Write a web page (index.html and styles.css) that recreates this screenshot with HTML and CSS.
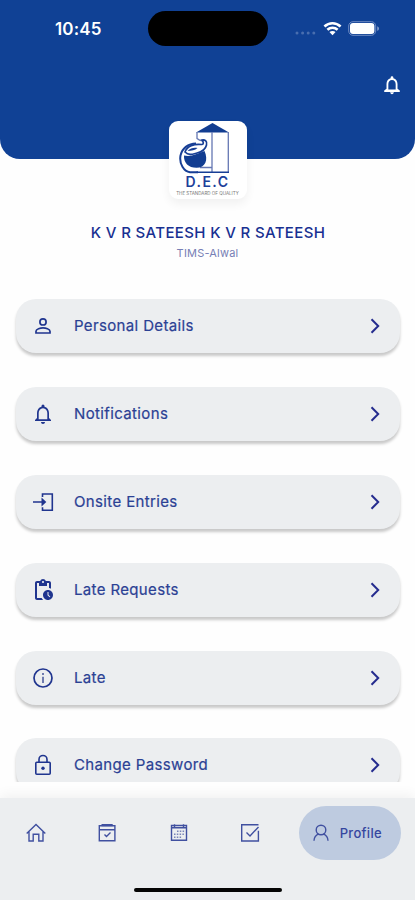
FILE: index.html
```html
<!DOCTYPE html>
<html lang="en">
<head>
<meta charset="utf-8">
<meta name="viewport" content="width=device-width, initial-scale=1">
<title>Profile</title>
<link rel="stylesheet" href="styles.css">
</head>
<body>
<main class="app">
  <header class="header">
    <div class="status">
      <span class="time">10:45</span>
      <span class="island"></span>
      <div class="indicators">
        <svg width="21" height="4" viewBox="0 0 21 4"><g fill="#496eaf"><circle cx="2" cy="2" r="1.5"/><circle cx="7.600" cy="2" r="1.5"/><circle cx="13.200" cy="2" r="1.5"/><circle cx="18.800" cy="2" r="1.5"/></g></svg>
        <svg class="wifi" width="19" height="15" viewBox="0 0 20 15"><g fill="none" stroke="#fff" stroke-width="2.700"><path d="M1.500 5.400C6.400.9 13.600.9 18.500 5.400"/><path d="M4.600 8.800c3.100-2.900 7.700-2.900 10.800 0"/></g><path d="M6.800 11.300c1.800-1.600 4.600-1.600 6.400 0L10 14.600z" fill="#fff"/></svg>
        <svg class="battery" width="32" height="15" viewBox="0 0 32 15"><rect x=".7" y=".7" width="27" height="13.600" rx="4.300" fill="none" stroke="#6e8bc2"/><rect x="2" y="2" width="24.400" height="11" rx="3" fill="#fff"/><path d="M29.200 5.200c2.400.8 2.400 3.800 0 4.600z" fill="#7f99c9"/></svg>
      </div>
    </div>
    <svg class="header-bell" width="22" height="22" viewBox="0 0 24 24"><path fill="#fff" d="M12 22c1.100 0 2-.9 2-2h-4c0 1.100.9 2 2 2zm6-6v-5c0-3.100-1.600-5.600-4.500-6.300V4a1.500 1.500 0 0 0-3 0v.7C7.600 5.400 6 7.900 6 11v5l-2.500 2v1.500h17V18zm-2 1H8v-6c0-2.500 1.500-4.500 4-4.500s4 2 4 4.500z"/></svg>
  </header>

  <section class="identity">
    <div class="logo">
      <svg width="56" height="53" viewBox="0 0 56 53">
        <path d="M17 11.500 33.500 2 50 11.500z" fill="#123d91"/>
        <g fill="none" stroke="#6577b3" stroke-width="1.300"><path d="M18 11v6.500c2 2 4 2.300 6 2.500M33 11v40M49.300 11v40M21 46.500h12"/></g>
        <path d="M17.500 51.300H50" stroke="#173e95" stroke-width="1.600"/>
        <path d="M17 22.500c-8 0-14 5-15.500 12C0 43 5 50.500 11 51.300h8" fill="none" stroke="#173e95" stroke-width="2"/>
        <path d="M5 34.500c7 1.500 13-1.500 20.500-4.500 4 9 1 16.800-8 16.800-8 0-13-5-12.500-12.300z" fill="#123d91"/>
        <path d="M6 31c2-6 9-8.500 17-7.500 2-.3 1.500-2.500 0-4.500 3-.5 5.500 1.300 4.500 5-1.300 5.500-5 7-9.500 8-4 1-8 3-12-1z" fill="#fff" stroke="#173e95" stroke-width="1.700"/>
        <path d="M8.500 30c3-3 6-3.500 10-3-2.500 2.300-6 3-10 3z" fill="#173e95"/>
      </svg>
      <span class="brand">D.E.C</span>
      <span class="tagline">THE STANDARD OF QUALITY</span>
    </div>
    <h1 class="name">K V R SATEESH K V R SATEESH</h1>
    <p class="site">TIMS-Alwal</p>
  </section>

  <nav class="menu">
    <a class="row"><svg class="icon" viewBox="0 0 24 24"><g fill="none" stroke="currentColor" stroke-width="1.700"><circle cx="12" cy="7.900" r="3.100"/><path d="M5 19v-1.800c0-2.300 4.500-3.300 7-3.300s7 1 7 3.300V19z"/></g></svg><span class="label">Personal Details</span><svg class="chevron" viewBox="0 0 10 16"><path d="m1.500 1.300 6.700 6.700-6.700 6.700"/></svg></a>
    <a class="row"><svg class="icon" viewBox="0 0 24 24"><path fill="currentColor" d="M12 22c1.100 0 2-.9 2-2h-4c0 1.100.9 2 2 2zm6-6v-5c0-3.070-1.630-5.640-4.500-6.320V4a1.500 1.500 0 0 0-3 0v.68C7.640 5.360 6 7.920 6 11v5l-2 2v1h16v-1zm-1.700 1.200H7.700V11c0-2.600 1.600-4.800 4.300-4.800s4.300 2.200 4.300 4.800z"/></svg><span class="label">Notifications</span><svg class="chevron" viewBox="0 0 10 16"><path d="m1.500 1.300 6.700 6.700-6.700 6.700"/></svg></a>
    <a class="row"><svg class="icon" viewBox="0 0 24 24"><path d="M11.500 7V4h9.800v16.300h-9.800v-3M2 12h11" fill="none" stroke="currentColor" stroke-width="1.600"/><path d="m10.500 7.500 4.800 4.500-4.800 4.500z" fill="currentColor"/></svg><span class="label">Onsite Entries</span><svg class="chevron" viewBox="0 0 10 16"><path d="m1.500 1.300 6.700 6.700-6.700 6.700"/></svg></a>
    <a class="row"><svg class="icon" viewBox="0 0 24 24"><path fill="currentColor" d="M17 12c-2.760 0-5 2.240-5 5s2.240 5 5 5 5-2.240 5-5-2.240-5-5-5zm1.650 7.350L16.500 17.200V14h1v2.790l1.850 1.850zM18 3h-3.180C14.400 1.840 13.300 1 12 1s-2.400.84-2.820 2H6c-1.100 0-2 .9-2 2v15c0 1.100.9 2 2 2h6.110a6.740 6.740 0 0 1-1.420-2H6V5h2v3h8V5h2v5.080c.71.100 1.380.31 2 .6V5c0-1.100-.9-2-2-2zm-6 2c-.55 0-1-.45-1-1s.45-1 1-1 1 .45 1 1-.45 1-1 1z"/></svg><span class="label">Late Requests</span><svg class="chevron" viewBox="0 0 10 16"><path d="m1.500 1.300 6.700 6.700-6.700 6.700"/></svg></a>
    <a class="row"><svg class="icon" viewBox="0 0 24 24"><circle cx="12" cy="12" r="9" fill="none" stroke="currentColor" stroke-width="1.700"/><path d="M12 10.800v6.200M12 7v2" stroke="#5967a4" stroke-width="1.700"/></svg><span class="label">Late</span><svg class="chevron" viewBox="0 0 10 16"><path d="m1.500 1.300 6.700 6.700-6.700 6.700"/></svg></a>
    <a class="row"><svg class="icon" viewBox="0 0 24 24"><g fill="none" stroke="currentColor" stroke-width="1.600"><rect x="4.800" y="9.300" width="14.400" height="12" rx="1"/><path d="M8 9V6.500a4 4 0 0 1 8 0V9"/></g><circle cx="12" cy="15.300" r="1.700" fill="currentColor"/></svg><span class="label">Change Password</span><svg class="chevron" viewBox="0 0 10 16"><path d="m1.500 1.300 6.700 6.700-6.700 6.700"/></svg></a>
  </nav>

  <footer class="tabbar">
    <div class="tabs">
      <a class="tab"><svg viewBox="0 0 24 24"><path d="m2.700 12.500 9.300-9 9.300 9M5 10.500v9.500h4.200v-6.800h5.600V20H19v-9.500"/></svg></a>
      <a class="tab"><svg viewBox="0 0 24 24"><path d="M4.300 4.700h15.600v15H4.300zM4.300 8.700h15.600M9.500 13.500l2 2 4-4"/><path d="M6.500 4.100h11.200" stroke-width="2.200"/></svg></a>
      <a class="tab"><svg viewBox="0 0 24 24"><path d="M4.500 4.500h15v14.700h-15zM4.500 6.700h15M7.500 3.200V6M16.500 3.200V6"/><path class="dates" d="M10 10.300h7.500M7 13.300h10.500M7 16.300h7.500"/></svg></a>
      <a class="tab"><svg viewBox="0 0 24 24"><path d="M20.500 3.700H3.700v16.300h16.700V9.800M8.500 11.500l3.500 3.400 8.500-9"/></svg></a>
      <a class="tab active"><svg viewBox="0 0 24 24"><circle cx="12" cy="9" r="4.800"/><path d="M5 19.800c0-4 2-5.800 4.800-7M19 19.800c0-4-2-5.800-4.800-7"/></svg><span>Profile</span></a>
    </div>
    <div class="home-indicator"></div>
  </footer>
</main>
</body>
</html>
```
FILE: styles.css
```css
* { box-sizing: border-box; }
body { margin: 0; background: #fff; font-family: Inter, "Liberation Sans", sans-serif; color: #2b4194; }
svg { display: block; flex: none; }
.app { display: flex; flex-direction: column; width: 415px; height: 900px; overflow: hidden; background: #fefefe; }

.header { height: 159px; flex: none; padding-top: 11px; background: #104195; border-radius: 0 0 20px 20px; }
.status { display: grid; grid-template-columns: 148px 120px 1fr; height: 35px; align-items: center; }
.time { padding: 1px 0 0 55px; color: #fff; font-size: 17px; font-weight: 600; line-height: 20px; letter-spacing: .15px; }
.island { height: 35px; border-radius: 18px; background: #000; }
.indicators { display: flex; align-items: center; padding-left: 27px; }
.indicators svg:first-child { margin-top: 9px; }
.wifi { margin: -1px 0 0 7px; }
.battery { margin-left: 6px; }
.header-bell { margin: 28px 12px 0 auto; }

.identity { display: flex; flex-direction: column; align-items: center; height: 140px; flex: none; margin-top: -38px; }
.logo { display: flex; flex-direction: column; align-items: center; width: 78px; height: 78px; border-radius: 9px; background: #fff; box-shadow: 0 5px 10px rgba(0,0,0,.055); }
.logo svg { margin-left: -2px; }
.brand { margin-top: 1px; font-size: 14px; line-height: 14px; font-weight: 600; letter-spacing: 1.500px; color: #1c409a; }
.tagline { margin-top: 2px; font-size: 4.500px; line-height: 6px; color: #777; white-space: nowrap; }
.name { margin: 25px 0 0; padding-left: 1px; font-size: 15px; line-height: 18px; font-weight: 500; letter-spacing: .36px; color: #183091; white-space: nowrap; }
.site { margin: 4px 0 0; font-size: 11px; line-height: 14px; letter-spacing: .2px; color: #777fb5; }

.menu { display: flex; flex-direction: column; gap: 33.900px; height: 483px; flex: none; margin-top: 38px; padding: 0 15px 0 16px; overflow: hidden; }
.row { display: flex; align-items: center; height: 54px; flex: none; padding: 0 20px 0 15px; border-radius: 20px; background: #eceef0; box-shadow: 0 3px 3px rgba(0,0,0,.21); }
.icon { width: 24px; height: 24px; color: #20358f; }
.label { flex: 1; margin-left: 19px; font-size: 15px; line-height: 20px; letter-spacing: .36px; -webkit-text-stroke: .2px; }
.chevron { width: 10px; height: 16px; fill: none; stroke: #252c8e; stroke-width: 2; }

.tabbar { flex: none; height: 102px; margin-top: 16px; padding-top: 8px; background: #eceef0; box-shadow: 0 -3px 12px rgba(0,0,0,.055); }
.tabs { display: flex; align-items: center; height: 54px; padding: 0 14px 0 24px; }
.tab { flex: none; width: 24px; margin-right: 47.300px; }
.tab svg { width: 24px; height: 24px; fill: none; stroke: #4050a0; stroke-width: 1.400; }
.tab .dates { stroke: #7984b8; stroke-dasharray: 1.500 1.300; }
.tab.active { display: flex; align-items: center; width: 102px; height: 54px; margin: 0 0 0 -10.500px; padding-left: 10px; border-radius: 27px; background: #becbe0; font-size: 13px; font-weight: 500; letter-spacing: .3px; color: #35469f; }
.tab.active span { margin-left: 7px; }
.home-indicator { width: 148px; height: 4px; margin: 28px auto 0; border-radius: 2px; background: #050505; }
```
